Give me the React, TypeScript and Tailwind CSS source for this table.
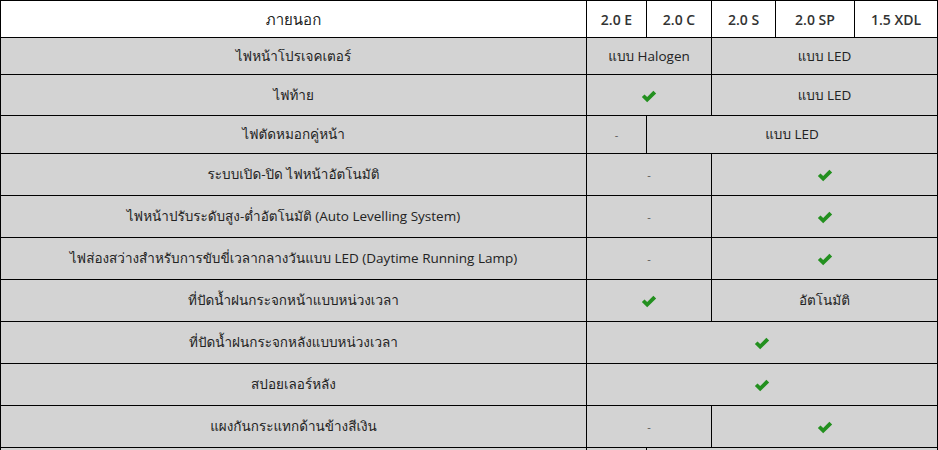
import React from "react";

type Cell = { text?: string; check?: boolean; dash?: boolean; span: number };
type Row = { label: string; h: string; cells: Cell[] };

function Check() {
  return (
    <svg width="16" height="13" viewBox="0 0 15 12" className="inline-block align-middle">
      <path d="M0.8 6.5 L3.3 4.1 L5.8 6.5 L11.6 0.7 L14.2 3.1 L5.8 11.3 Z" fill="#23901f" />
    </svg>
  );
}

const rows: Row[] = [
  {
    label: "ไฟหน้าโปรเจคเตอร์",
    h: "h-[37px]",
    cells: [
      { text: "แบบ Halogen", span: 2 },
      { text: "แบบ LED", span: 3 },
    ],
  },
  {
    label: "ไฟท้าย",
    h: "h-[41px]",
    cells: [
      { check: true, span: 2 },
      { text: "แบบ LED", span: 3 },
    ],
  },
  {
    label: "ไฟตัดหมอกคู่หน้า",
    h: "h-[38px]",
    cells: [
      { dash: true, span: 1 },
      { text: "แบบ LED", span: 4 },
    ],
  },
  {
    label: "ระบบเปิด-ปิด ไฟหน้าอัตโนมัติ",
    h: "h-[42px]",
    cells: [
      { dash: true, span: 2 },
      { check: true, span: 3 },
    ],
  },
  {
    label: "ไฟหน้าปรับระดับสูง-ต่ำอัตโนมัติ (Auto Levelling System)",
    h: "h-[42px]",
    cells: [
      { dash: true, span: 2 },
      { check: true, span: 3 },
    ],
  },
  {
    label: "ไฟส่องสว่างสำหรับการขับขี่เวลากลางวันแบบ LED (Daytime Running Lamp)",
    h: "h-[42px]",
    cells: [
      { dash: true, span: 2 },
      { check: true, span: 3 },
    ],
  },
  {
    label: "ที่ปัดน้ำฝนกระจกหน้าแบบหน่วงเวลา",
    h: "h-[42px]",
    cells: [
      { check: true, span: 2 },
      { text: "อัตโนมัติ", span: 3 },
    ],
  },
  {
    label: "ที่ปัดน้ำฝนกระจกหลังแบบหน่วงเวลา",
    h: "h-[42px]",
    cells: [{ check: true, span: 5 }],
  },
  {
    label: "สปอยเลอร์หลัง",
    h: "h-[42px]",
    cells: [{ check: true, span: 5 }],
  },
  {
    label: "แผงกันกระแทกด้านข้างสีเงิน",
    h: "h-[42px]",
    cells: [
      { dash: true, span: 2 },
      { check: true, span: 3 },
    ],
  },
];

const models = ["2.0 E", "2.0 C", "2.0 S", "2.0 SP", "1.5 XDL"];

export default function App() {
  return (
    <div
      className="w-[938px] h-[450px] overflow-hidden bg-white text-[#222] text-[13px]"
      style={{ fontFamily: '"Open Sans", Tahoma, Loma, "Noto Sans", sans-serif' }}
    >
      <table className="w-[937px] table-fixed border-collapse">
        <colgroup>
          <col className="w-[586px]" />
          <col className="w-[60px]" />
          <col className="w-[65px]" />
          <col className="w-[64px]" />
          <col className="w-[79px]" />
          <col className="w-[83px]" />
        </colgroup>
        <thead>
          <tr className="h-[37px] bg-white">
            <th className="border border-black text-center text-[15px] font-normal">ภายนอก</th>
            {models.map((m) => (
              <th key={m} className="border border-black text-center text-[14px] font-semibold text-[#333]">
                {m}
              </th>
            ))}
          </tr>
        </thead>
        <tbody>
          {rows.map((r) => (
            <tr key={r.label} className={`${r.h} bg-[#d3d3d3]`}>
              <td className="border border-black text-center text-[13.5px]">{r.label}</td>
              {r.cells.map((c, i) => (
                <td key={i} colSpan={c.span} className="border border-black text-center text-[13.5px]">
                  {c.check ? <Check /> : c.dash ? <span className="text-[11px] text-[#555]">-</span> : c.text}
                </td>
              ))}
            </tr>
          ))}
          <tr className="h-[42px] bg-[#d3d3d3]">
            <td className="border border-black" />
            <td className="border border-black" />
            <td colSpan={4} className="border border-black" />
          </tr>
        </tbody>
      </table>
    </div>
  );
}
